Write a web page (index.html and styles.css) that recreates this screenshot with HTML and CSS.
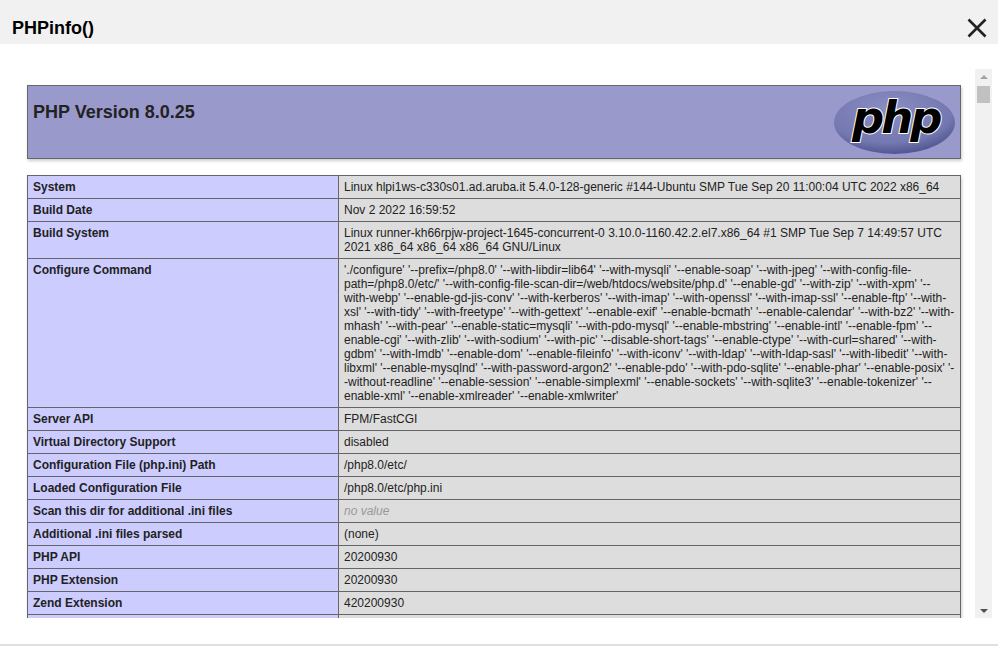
FILE: index.html
```html
<!DOCTYPE html>
<html lang="en">
<head>
  <meta charset="UTF-8" />
  <title>PHPinfo()</title>
  <link rel="stylesheet" href="styles.css">
</head>
<body>

<div class="modal">
  <div class="modal-head">
    <h3>PHPinfo()</h3>
    <svg class="close" width="20" height="20" viewBox="0 0 20 20">
      <path d="M1.5 1.5L18.5 18.5M18.5 1.5L1.5 18.5" />
    </svg>
  </div>

  <div class="modal-body">
    <div class="frame">
      <div class="info">
        <div class="version">
          <h1>PHP Version 8.0.25</h1>
          <svg class="logo" width="121" height="63" viewBox="0 0 121 63">
            <defs>
              <radialGradient id="oval" cx="0.45" cy="0.3" r="0.75">
                <stop offset="0" stop-color="#8a8ec3" />
                <stop offset="0.7" stop-color="#7478b0" />
                <stop offset="1" stop-color="#484c89" />
              </radialGradient>
            </defs>
            <ellipse cx="60.5" cy="31.5" rx="60.5" ry="31.5" fill="url(#oval)" />
            <text class="logo-text" x="18" y="42">php</text>
          </svg>
        </div>

        <table>
          <tr><td class="e">System</td><td class="v">Linux hlpi1ws-c330s01.ad.aruba.it 5.4.0-128-generic #144-Ubuntu SMP Tue Sep 20 11:00:04 UTC 2022 x86_64</td></tr>
          <tr><td class="e">Build Date</td><td class="v">Nov 2 2022 16:59:52</td></tr>
          <tr><td class="e">Build System</td><td class="v">Linux runner-kh66rpjw-project-1645-concurrent-0 3.10.0-1160.42.2.el7.x86_64 #1 SMP Tue Sep 7 14:49:57 UTC 2021 x86_64 x86_64 x86_64 GNU/Linux</td></tr>
          <tr><td class="e">Configure Command</td><td class="v">'./configure' '--prefix=/php8.0' '--with-libdir=lib64' '--with-mysqli' '--enable-soap' '--with-jpeg' '--with-config-file-path=/php8.0/etc/' '--with-config-file-scan-dir=/web/htdocs/website/php.d' '--enable-gd' '--with-zip' '--with-xpm' '--with-webp' '--enable-gd-jis-conv' '--with-kerberos' '--with-imap' '--with-openssl' '--with-imap-ssl' '--enable-ftp' '--with-xsl' '--with-tidy' '--with-freetype' '--with-gettext' '--enable-exif' '--enable-bcmath' '--enable-calendar' '--with-bz2' '--with-mhash' '--with-pear' '--enable-static=mysqli' '--with-pdo-mysql' '--enable-mbstring' '--enable-intl' '--enable-fpm' '--enable-cgi' '--with-zlib' '--with-sodium' '--with-pic' '--disable-short-tags' '--enable-ctype' '--with-curl=shared' '--with-gdbm' '--with-lmdb' '--enable-dom' '--enable-fileinfo' '--with-iconv' '--with-ldap' '--with-ldap-sasl' '--with-libedit' '--with-libxml' '--enable-mysqlnd' '--with-password-argon2' '--enable-pdo' '--with-pdo-sqlite' '--enable-phar' '--enable-posix' '--without-readline' '--enable-session' '--enable-simplexml' '--enable-sockets' '--with-sqlite3' '--enable-tokenizer' '--enable-xml' '--enable-xmlreader' '--enable-xmlwriter'</td></tr>
          <tr><td class="e">Server API</td><td class="v">FPM/FastCGI</td></tr>
          <tr><td class="e">Virtual Directory Support</td><td class="v">disabled</td></tr>
          <tr><td class="e">Configuration File (php.ini) Path</td><td class="v">/php8.0/etc/</td></tr>
          <tr><td class="e">Loaded Configuration File</td><td class="v">/php8.0/etc/php.ini</td></tr>
          <tr><td class="e">Scan this dir for additional .ini files</td><td class="v"><i class="none">no value</i></td></tr>
          <tr><td class="e">Additional .ini files parsed</td><td class="v">(none)</td></tr>
          <tr><td class="e">PHP API</td><td class="v">20200930</td></tr>
          <tr><td class="e">PHP Extension</td><td class="v">20200930</td></tr>
          <tr><td class="e">Zend Extension</td><td class="v">420200930</td></tr>
          <tr><td class="e">&nbsp;</td><td class="v">&nbsp;</td></tr>
        </table>
      </div>
    </div>

    <div class="scrollbar">
      <div class="arrow-up"></div>
      <div class="thumb"></div>
      <div class="arrow-down"></div>
    </div>
  </div>

  <div class="modal-foot"></div>
</div>

</body>
</html>
```

FILE: styles.css
```css
* {
  box-sizing: border-box;
}

body {
  margin: 0;
  height: 655px;
  overflow: hidden;
  background: #fff;
  font-family: "Liberation Sans", Arial, sans-serif;
  color: #222;
}

.modal-head {
  height: 44px;
  padding: 0 11px 0 12px;
  background: #f1f1f1;
  display: flex;
  justify-content: space-between;
  align-items: center;
}

.modal-head h3 {
  margin: 13px 0 0;
  font-size: 18px;
  color: #000;
}

.close {
  margin-top: 11px;
}

.close path {
  fill: none;
  stroke: #222;
  stroke-width: 2.6;
}

.modal-body {
  height: 549px;
  margin-top: 25px;
  padding-right: 6px;
  display: flex;
}

.frame {
  flex: 1;
  overflow: hidden;
  padding: 16px 14px 0 27px;
}

.version {
  height: 74px;
  padding: 5px 5px 0 5px;
  margin-bottom: 16px;
  background: #99c;
  border: 1px solid #666;
  box-shadow: 1px 2px 3px rgba(0, 0, 0, 0.2);
  display: flex;
  justify-content: space-between;
}

.version h1 {
  margin: 11px 0 0;
  font-size: 18px;
}

.logo-text {
  font-family: "DejaVu Sans", sans-serif;
  font-size: 45px;
  font-weight: bold;
  font-style: italic;
  letter-spacing: -3px;
  fill: #000;
  stroke: #fff;
  stroke-width: 2px;
  paint-order: stroke;
}

table {
  width: 934px;
  border-collapse: collapse;
  table-layout: fixed;
  font-size: 12px;
  box-shadow: 1px 2px 3px rgba(0, 0, 0, 0.2);
}

td {
  border: 1px solid #666;
  padding: 4px 5px;
  vertical-align: top;
  overflow-wrap: break-word;
}

.e {
  width: 311px;
  background: #ccf;
  font-weight: bold;
}

.v {
  background: #ddd;
}

.none {
  color: #999;
}

.scrollbar {
  width: 17px;
  background: #f1f1f1;
  display: flex;
  flex-direction: column;
  align-items: center;
}

.arrow-up {
  margin-top: 6px;
  border: 4px solid transparent;
  border-top: 0;
  border-bottom: 4px solid #a3a3a3;
}

.thumb {
  width: 13px;
  height: 17px;
  margin-top: 7px;
  background: #c1c1c1;
}

.arrow-down {
  margin-top: auto;
  margin-bottom: 5px;
  border: 4px solid transparent;
  border-bottom: 0;
  border-top: 4px solid #505050;
}

.modal-foot {
  height: 2px;
  margin-top: 26px;
  background: #e0e0e0;
}
```
